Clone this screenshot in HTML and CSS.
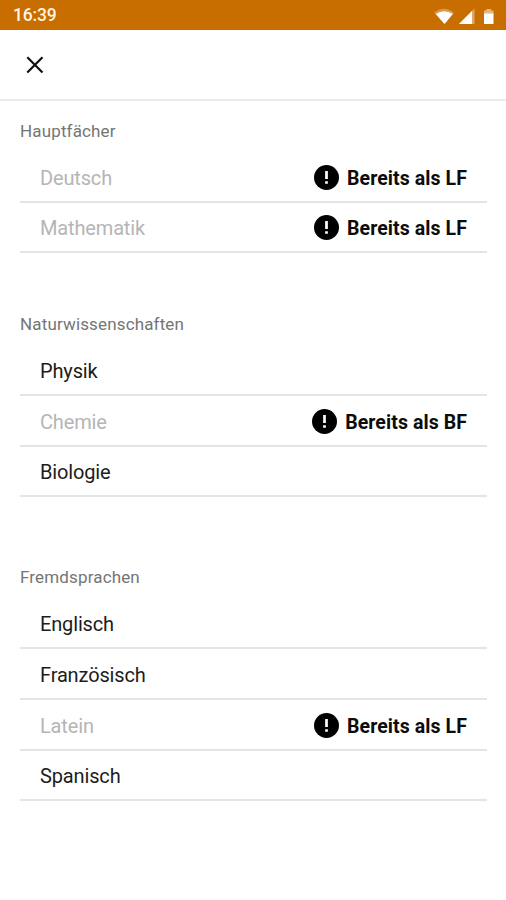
FILE: index.html
```html
<!DOCTYPE html>
<html lang="de">
<head>
<meta charset="utf-8">
<title>Fächerwahl</title>
<link rel="stylesheet" href="styles.css">
</head>
<body>
<svg class="defs" width="0" height="0" aria-hidden="true">
  <symbol id="alert" viewBox="0 0 24 24">
    <circle cx="12" cy="12" r="12" fill="#000"/>
    <path d="M10.700 5.800h2.600v7.600h-2.600zM10.700 15.600h2.600v2.500h-2.600z" fill="#fff"/>
  </symbol>
</svg>
<div class="status">
  <span class="time">16:39</span>
  <svg class="signals" width="64" height="20" viewBox="0 0 64 20">
    <path d="M0 5.600Q10 -2.200 20 5.600L10.500 17z" fill="#fff" opacity=".3"/>
    <path d="M1.800 7Q10.300 1.300 18.800 7L10.500 17z" fill="#fff"/>
    <path d="M40.500 1.500V17H25z" fill="#fff" opacity=".4"/>
    <path d="M38 4V17H25z" fill="#fff"/>
    <path d="M50 3.500h2.500V2h4.500v1.500h2.500V7H50z" fill="#fff" opacity=".5"/>
    <path d="M50 6.500h9.500V17H50z" fill="#fff"/>
  </svg>
</div>
<header class="bar">
  <svg class="close" width="18" height="18" viewBox="0 0 18 18"><path d="M1.300 1.300 16.500 16.500M16.500 1.300 1.300 16.500" stroke="#111" stroke-width="2.200"/></svg>
</header>
<main>
  <section class="group">
    <h2>Hauptfächer</h2>
    <ul>
      <li class="taken"><span>Deutsch</span><b><svg><use href="#alert"/></svg><span>Bereits als LF</span></b></li>
      <li class="taken"><span>Mathematik</span><b><svg><use href="#alert"/></svg><span>Bereits als LF</span></b></li>
    </ul>
  </section>
  <section class="group science">
    <h2>Naturwissenschaften</h2>
    <ul>
      <li><span>Physik</span></li>
      <li class="taken"><span>Chemie</span><b><svg><use href="#alert"/></svg><span>Bereits als BF</span></b></li>
      <li><span>Biologie</span></li>
    </ul>
  </section>
  <section class="group">
    <h2>Fremdsprachen</h2>
    <ul>
      <li><span>Englisch</span></li>
      <li><span>Französisch</span></li>
      <li class="taken"><span>Latein</span><b><svg><use href="#alert"/></svg><span>Bereits als LF</span></b></li>
      <li><span>Spanisch</span></li>
    </ul>
  </section>
</main>
</body>
</html>
```
FILE: styles.css
```css
* { box-sizing: border-box; }
body { margin: 0; min-height: 900px; background: #fff; color: #1c1c1c; font-family: Roboto, "Liberation Sans", sans-serif; }
.defs { display: block; height: 0; }
.status { display: flex; justify-content: space-between; align-items: center; height: 30px; padding: 0 2px 0 13px; background: #c86d00; }
.time { color: #fff4e4; font-size: 17.5px; font-weight: 500; letter-spacing: -0.2px; line-height: 30px; }
.signals { margin-right: 6px; margin-top: 3px; }
.bar { display: flex; align-items: center; height: 71px; padding-left: 26px; border-bottom: 2px solid #ebebeb; }
main { padding: 0 19px 0 20px; }
.group { padding-top: 20px; margin-bottom: 41px; }
.science { margin-bottom: 50px; }
h2 { margin: 0; height: 31px; font-size: 17px; font-weight: 400; line-height: 21px; letter-spacing: 0.15px; color: #757575; }
ul { margin: 0; padding: 0; list-style: none; }
li { display: flex; align-items: center; justify-content: space-between; height: 50.7px; padding: 2.8px 20px 0; border-bottom: 2px solid #e4e4e4; font-size: 20px; letter-spacing: -0.15px; }
.taken { color: #b5b5b5; }
b { display: flex; align-items: center; gap: 8.5px; color: #0c0c0c; font-weight: 700; font-size: 19.5px; letter-spacing: 0.08px; }
b svg { width: 25px; height: 25px; margin-top: -1px; }
b span { padding-top: 1px; }
```
